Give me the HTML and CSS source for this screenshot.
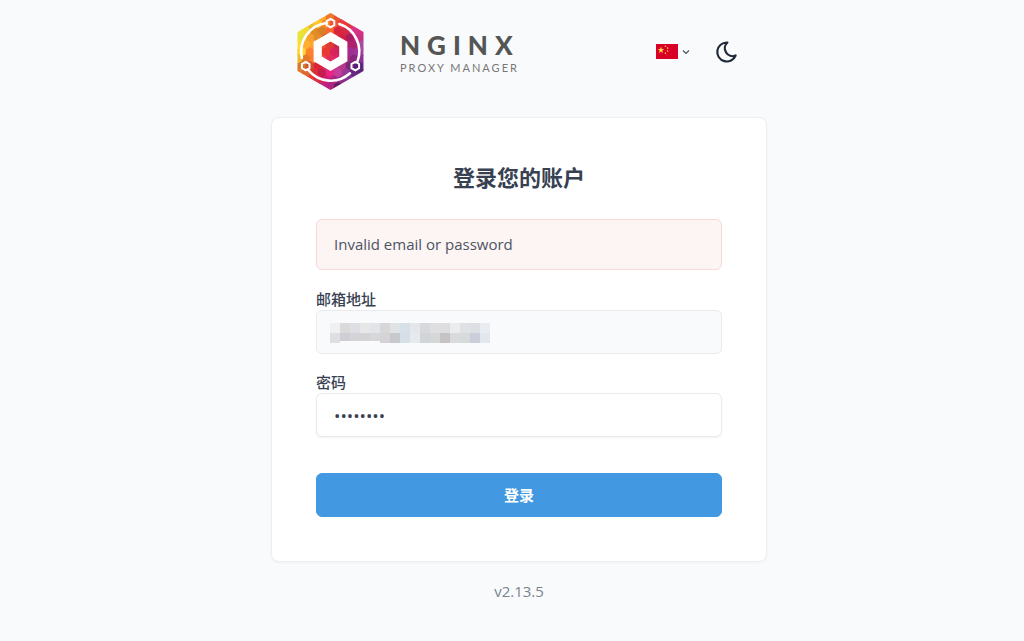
FILE: index.html
```html
<!DOCTYPE html>
<html lang="zh-CN">
<head>
    <meta charset="UTF-8">
    <meta name="viewport" content="width=device-width, initial-scale=1.0">
    <title>Nginx Proxy Manager</title>
    <link rel="stylesheet" href="styles.css">
</head>
<body>

<div class="container">
    <header class="header">
        <div class="brand">
            <svg class="logo" viewBox="7 5 67 77" aria-hidden="true">
                <defs>
                    <clipPath id="hexClip">
                        <path d="M40.5 5 73.5 24V63L40.5 82 7.5 63V24z"/>
                    </clipPath>
                </defs>
                <g id="logoCells" clip-path="url(#hexClip)"></g>
                <g fill="none" stroke="#fff" stroke-width="2.6" stroke-linecap="round">
                    <path d="M36.5 15A28.8 28.8 0 0 0 11.9 50"/>
                    <path d="M49.3 16A28.8 28.8 0 0 1 67.3 54"/>
                    <path d="M18.3 62A28.8 28.8 0 0 0 60 65.3"/>
                    <path stroke-width="2" d="M40.5 10.8 44.3 13v4.2l-3.8 2.2-3.8-2.2V13z"/>
                    <path stroke-width="2" d="M15.7 53.8 19.5 56v4.2l-3.8 2.2-3.8-2.2V56z"/>
                    <path stroke-width="2" d="M65.3 53.8 69.1 56v4.2l-3.8 2.2-3.8-2.2V56z"/>
                </g>
                <path fill="#fff" fill-rule="evenodd" d="M40.5 24 57.4 33.8V53.2L40.5 63 23.6 53.2V33.8zM40.5 33.5 31.8 38.5V48.5L40.5 53.5 49.2 48.5V38.5z"/>
            </svg>
            <div class="brand-text">
                <span class="brand-name">NGINX</span>
                <span class="brand-sub">PROXY MANAGER</span>
            </div>
        </div>
        <div class="actions">
            <button class="lang-button" type="button" aria-label="中文">
                <svg class="flag" viewBox="0 0 22 15">
                    <path fill="#d80027" d="M0 0h22v15H0z"/>
                    <g fill="#ffda44">
                        <path d="M5 2.6 5.8 5h2.5L6.3 6.5 7 8.9 5 7.4 3 8.9 3.7 6.5 1.7 5h2.5z"/>
                        <circle cx="9.4" cy="2.3" r="0.8"/>
                        <circle cx="11.6" cy="4.1" r="0.8"/>
                        <circle cx="11.6" cy="7" r="0.8"/>
                        <circle cx="9.4" cy="9.2" r="0.8"/>
                    </g>
                </svg>
                <svg class="chevron" viewBox="0 0 8 6"><path d="M1 1.5 4 4.5 7 1.5"/></svg>
            </button>
            <button class="theme-button" type="button" aria-label="Dark mode">
                <svg class="moon" viewBox="0 0 24 24"><path d="M12 2.5c.13 0 .26 0 .4 0a7.8 7.8 0 0 0 8.2 13A9.5 9.5 0 1 1 12 2.5z"/></svg>
            </button>
        </div>
    </header>

    <form class="card">
        <h2>登录您的账户</h2>
        <div class="alert" role="alert">Invalid email or password</div>

        <div class="form-group">
            <label for="email">邮箱地址</label>
            <div class="field">
                <input class="filled" type="email" id="email">
                <svg class="mosaic" viewBox="0 0 160 20" shape-rendering="crispEdges" aria-hidden="true"></svg>
            </div>
        </div>
        <div class="form-group">
            <label for="password">密码</label>
            <input type="password" id="password" value="changeme">
        </div>
        <button class="btn" type="button">登录</button>
    </form>

    <footer class="version">v2.13.5</footer>
</div>

<script>
    const svgNS = 'http://www.w3.org/2000/svg';

    // Colores base del logo: x, y, r, g, b
    const anchors = [
        [8, 28, 225, 230, 60], [16, 20, 250, 225, 50], [27, 14, 252, 185, 40],
        [40, 6, 235, 120, 40], [10, 46, 252, 205, 40], [22, 34, 252, 165, 45],
        [20, 48, 248, 120, 45], [12, 62, 225, 125, 45], [28, 24, 235, 140, 40],
        [40, 24, 245, 95, 45], [37, 42, 238, 58, 50], [46, 48, 225, 35, 105],
        [22, 68, 240, 60, 50], [28, 62, 205, 30, 50], [54, 14, 240, 60, 60],
        [50, 26, 205, 30, 60], [68, 24, 225, 50, 140], [60, 34, 165, 25, 95],
        [36, 68, 225, 30, 125], [40, 80, 190, 35, 135], [50, 64, 190, 60, 150],
        [64, 46, 150, 40, 140], [72, 40, 165, 75, 160], [68, 60, 90, 35, 125],
        [58, 70, 125, 50, 145], [48, 78, 105, 30, 105]
    ];

    function cellColor(x, y, shade) {
        let total = 0, rgb = [0, 0, 0];
        anchors.forEach(a => {
            const w = 1 / Math.pow((x - a[0]) ** 2 + (y - a[1]) ** 2 + 4, 2);
            total += w;
            rgb = rgb.map((c, i) => c + a[i + 2] * w);
        });
        return `rgb(${rgb.map(c => Math.max(0, Math.min(255, Math.round(c / total * shade)))).join(',')})`;
    }

    // Celdas hexagonales del logo
    const cells = document.getElementById('logoCells');
    for (let row = 0; row < 14; row++) {
        for (let col = 0; col < 10; col++) {
            const x = 4 + col * 8 + (row % 2) * 4;
            const y = 2 + row * 7;
            const shade = 0.92 + ((row * 7 + col * 5) % 6) * 0.03;
            const cell = document.createElementNS(svgNS, 'path');
            cell.setAttribute('d', `M${x} ${y - 5}l4.2 2.4v5.2l-4.2 2.4-4.2-2.4v-5.2z`);
            cell.setAttribute('fill', cellColor(x, y, shade));
            cells.appendChild(cell);
        }
    }

    // Mosaico que oculta el correo
    const rows = [
        ['#f0f0f0', '#dbdadb', '#dedfe4', '#e6e7e6', '#e1e5ea', '#d9d6d7', '#e0e3e5', '#d6e0e9', '#e3e6ea', '#d8d9dc', '#dfdfe1', '#dedee0', '#ebecee', '#e0e1e5', '#dce0e4', '#e9ecf0'],
        ['#dfdfe1', '#cfced5', '#d4d4d8', '#d3d3d5', '#d7d7da', '#d5d3d5', '#c8c9cc', '#d6dfe7', '#e7eaed', '#d1d5d7', '#d6d8d8', '#c7c2c3', '#d7dbdc', '#d7dada', '#cbcddb', '#e2e7ef']
    ];
    const mosaic = document.querySelector('.mosaic');
    rows.forEach((colors, r) => colors.forEach((color, c) => {
        const block = document.createElementNS(svgNS, 'rect');
        block.setAttribute('x', c * 10);
        block.setAttribute('y', r * 10);
        block.setAttribute('width', 10);
        block.setAttribute('height', r === 1 && c > 0 && c < 5 ? 8 : 10);
        block.setAttribute('fill', color);
        mosaic.appendChild(block);
    }));
</script>

</body>
</html>
```
FILE: styles.css
```css
* { box-sizing: border-box; }
body { margin: 0; padding: 13px 0 24px 14px; font-family: "Open Sans", "Noto Sans CJK SC", sans-serif; font-size: 15px; line-height: 21px; color: #374151; background-color: #f9fafb; }
.container { max-width: 496px; margin: 0 auto; }

/* Cabecera */
.header { display: flex; align-items: center; justify-content: space-between; padding: 0 28px 0 26px; margin-bottom: 27px; }
.brand { display: flex; align-items: center; gap: 36px; }
.logo { display: block; width: 67px; height: 77px; }
.brand-text { display: flex; flex-direction: column; font-family: Lato, sans-serif; color: #555; }
.brand-name { font-size: 26px; line-height: 32px; font-weight: 900; letter-spacing: 7px; }
.brand-sub { font-size: 11px; line-height: 13px; letter-spacing: 2px; color: #777; }
.actions { display: flex; align-items: center; gap: 25px; }
.lang-button, .theme-button { display: flex; align-items: center; gap: 4px; padding: 0; border: none; background: none; cursor: pointer; }
.flag { width: 22px; height: 15px; }
.chevron { width: 8px; height: 6px; fill: none; stroke: #4b5563; stroke-width: 1.2; }
.moon { width: 24px; height: 24px; fill: none; stroke: #1f2937; stroke-width: 2.2; stroke-linejoin: round; }

/* Formulario */
.card { padding: 44px; border: 1px solid #eceef1; border-radius: 8px; background-color: #fff; box-shadow: 0 1px 3px rgba(31, 41, 55, 0.04); }
h2 { margin: 0 0 27px; font-size: 22px; line-height: 30px; font-weight: 700; text-align: center; }
.alert { padding: 14px 17px; margin-bottom: 19px; border: 1px solid #f7d9d9; border-radius: 6px; background-color: #fdf4f4; color: #4b5563; }
.form-group { margin-bottom: 18px; }
.form-group label { display: block; line-height: 21px; font-weight: 500; }
.form-group input { display: block; width: 100%; height: 44px; padding: 0 17px; border: 1px solid #e8eaed; border-radius: 6px; background-color: #fff; font: inherit; color: inherit; box-shadow: 0 1px 2px rgba(31, 41, 55, 0.06); }
.form-group input.filled { background-color: #f9fafb; box-shadow: none; }
.form-group input[type="password"] { font-size: 17px; }
.field { position: relative; }
.mosaic { position: absolute; left: 14px; top: 13px; width: 160px; height: 20px; }
.btn { display: block; width: 100%; height: 44px; margin-top: 36px; border: 1px solid #4299e1; border-radius: 6px; background-color: #4299e1; color: #fff; font: inherit; font-weight: 600; cursor: pointer; }

.version { margin-top: 19px; text-align: center; color: #7b838f; }
```
